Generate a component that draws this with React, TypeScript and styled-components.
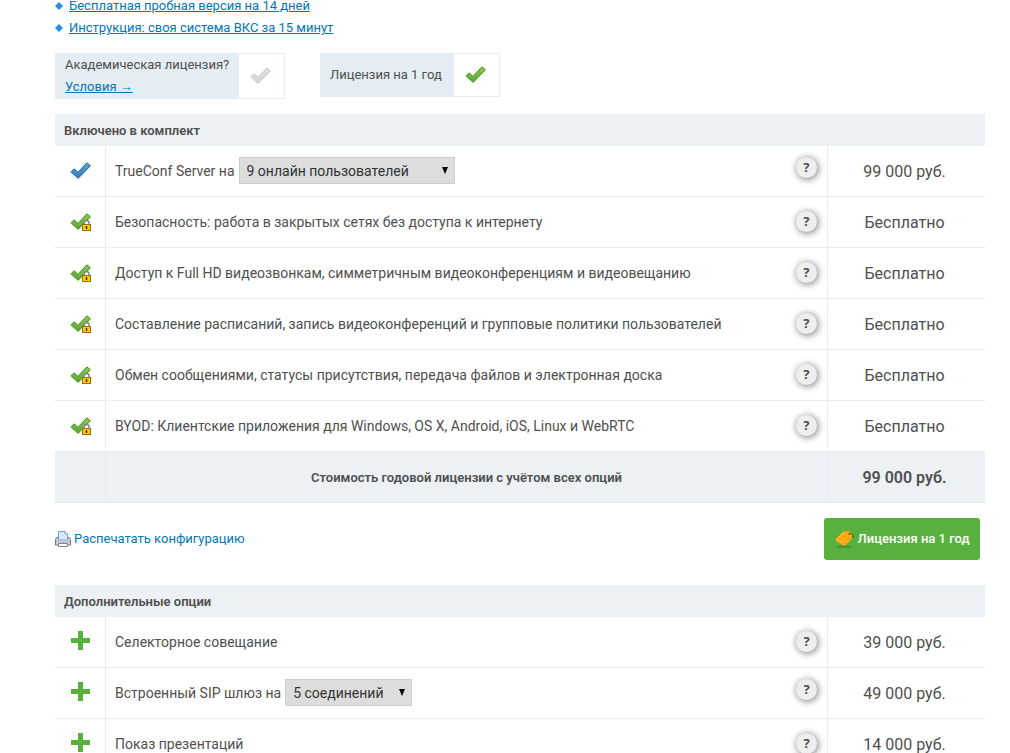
import React, { useState } from 'react';
import styled, { createGlobalStyle } from 'styled-components';

const line = '#e4edf2';
const band = '#ecf1f5';
const blue = '#0475b7';
const green = '#58b13f';

const GlobalStyle = createGlobalStyle`
  *, *::before, *::after { box-sizing: border-box; }
  body {
    margin: 0;
    background: #fff;
    color: #4f4f4f;
    font-family: Roboto, "Liberation Sans", sans-serif;
    font-size: 14px;
    line-height: 22px;
  }
  svg { display: block; flex: none; }
`;

const Page = styled.main`
  margin-top: -5px;
  padding: 0 25px 0 55px;
`;

const LinkList = styled.ul`
  list-style: none;
  margin: 0 0 14px;
  padding: 0;
  font-size: 13px;
`;

const LinkItem = styled.li`
  display: flex;
  align-items: center;
  gap: 6px;
`;

const Link = styled.a`
  color: ${blue};
  text-decoration: underline;
`;

const Toggles = styled.div`
  display: flex;
  align-items: flex-start;
  gap: 35px;
  margin-bottom: 15px;
  font-size: 13px;
`;

const Toggle = styled.div<{ $width: number }>`
  display: flex;
  width: ${(p) => p.$width}px;
  border: 1px solid ${line};
`;

const ToggleText = styled.div`
  flex: 1;
  display: flex;
  flex-direction: column;
  align-items: flex-start;
  justify-content: center;
  min-height: 42px;
  padding-left: 9px;
  background: #e4edf2;
`;

const ToggleBox = styled.label`
  position: relative;
  display: flex;
  align-items: center;
  justify-content: center;
  width: 45px;
  padding-right: 3px;
  cursor: pointer;
`;

const HiddenCheck = styled.input`
  position: absolute;
  inset: 0;
  width: 100%;
  height: 100%;
  margin: 0;
  opacity: 0;
  cursor: pointer;
`;

const Table = styled.table`
  width: 100%;
  table-layout: fixed;
  border-collapse: separate;
  border-spacing: 0;
`;

const IconCol = styled.col`
  width: 51px;
`;

const PriceCol = styled.col`
  width: 158px;
`;

const Heading = styled.th`
  height: 32px;
  padding: 2px 9px 0;
  background: ${band};
  font-size: 13px;
  font-weight: 600;
  text-align: left;
`;

const Cell = styled.td`
  height: 51px;
  padding: 0;
  border-bottom: 1px solid ${line};
`;

const IconCell = styled(Cell)`
  border-right: 1px solid ${line};
`;

const IconBox = styled.div`
  display: flex;
  justify-content: center;
`;

const AddButton = styled.button`
  display: block;
  margin: 0 auto;
  padding: 0 0 4px;
  border: 0;
  background: none;
  cursor: pointer;
`;

const Option = styled.div<{ $tall: boolean }>`
  display: flex;
  align-items: center;
  gap: 4px;
  padding: 0 10px 0 9px;
  padding-bottom: ${(p) => (p.$tall ? 1 : 0)}px;
`;

const Help = styled.button<{ $raised: boolean }>`
  width: 21px;
  height: 21px;
  margin: 0 0 ${(p) => (p.$raised ? 6 : 2)}px auto;
  padding: 0;
  border: 0;
  border-radius: 50%;
  background: #eee;
  box-shadow: 1px 1px 6px 1px #999;
  color: #4c4c4c;
  font: 700 13px/21px "Noto Sans", sans-serif;
  cursor: pointer;
`;

const SelectWrap = styled.span<{ $width: number }>`
  position: relative;
  width: ${(p) => p.$width}px;
`;

const Select = styled.select`
  display: block;
  appearance: none;
  width: 100%;
  height: 27px;
  padding: 0 7px;
  border: 1px solid #ccc;
  border-radius: 0;
  background: #ddd;
  color: #333;
  font: inherit;
`;

const Arrow = styled.svg`
  position: absolute;
  top: 10px;
  right: 7px;
  pointer-events: none;
`;

const PriceCell = styled(Cell)`
  padding: 2px 4px 0 0;
  border-left: 1px solid ${line};
  font-size: 16px;
  text-align: center;
`;

const TotalRow = styled.tr`
  background: ${band};
  font-weight: 600;
`;

const TotalLabel = styled(Cell)`
  padding-top: 2px;
  font-size: 13px;
  text-align: center;
`;

const Actions = styled.div`
  display: flex;
  align-items: center;
  justify-content: space-between;
  padding: 15px 5px 25px 0;
  font-size: 13px;
`;

const PrintLink = styled.a`
  display: flex;
  align-items: center;
  gap: 3px;
  color: ${blue};
  text-decoration: none;
`;

const BuyButton = styled.button`
  display: flex;
  align-items: center;
  justify-content: center;
  gap: 4px;
  width: 156px;
  height: 42px;
  padding: 0;
  border: 0;
  border-radius: 3px;
  background: ${green};
  color: #fff;
  font: inherit;
  font-weight: 500;
  cursor: pointer;
`;

const tones = {
  green: ['#8fce52', '#5aa336', '#458a26', '#e2f5d2'],
  blue: ['#64abda', '#2f79b0', '#1f6497', '#d6ebf8'],
  grey: ['#e0e0e0', '#d6d6d6', '#c6c6c6', '#f9f9f9'],
};

function Check({ tone, locked }: { tone: keyof typeof tones; locked?: boolean }) {
  const [top, bottom, edge, glow] = tones[tone];
  const id = `check-${tone}`;
  const shape = 'M2.2 11 5.2 8 9 11.5 18 2 21.200 4.8 9.2 17.2Z';
  return (
    <svg width="22" height="20" viewBox="0 0 22 20" aria-hidden="true" overflow="visible">
      <defs>
        <linearGradient id={id} x1="0" y1="0" x2="0" y2="1">
          <stop offset="0" stopColor={top} />
          <stop offset="1" stopColor={bottom} />
        </linearGradient>
      </defs>
      <path d={shape} fill="none" stroke={glow} strokeWidth="3" strokeLinejoin="round" />
      <path d={shape} fill={`url(#${id})`} stroke={edge} strokeWidth="1" />
      {locked && (
        <g>
          <path d="M15 13v-2a2.500 2.500 0 0 1 5 0v2" fill="#fff" fillOpacity=".5" stroke="#858585" strokeWidth="1.500" />
          <rect x="13.500" y="12.500" width="8" height="6" fill="#ffc814" stroke="#9a6f00" />
          <path d="M17.500 14v3" stroke="#3c2a00" strokeWidth="1.500" />
        </g>
      )}
    </svg>
  );
}

function Plus() {
  return (
    <svg width="19" height="19" viewBox="0 0 19 19" aria-hidden="true">
      <path d="M7 0h5v7h7v5h-7v7H7v-7H0V7h7z" fill={green} />
    </svg>
  );
}

function Diamond() {
  return (
    <svg width="8" height="8" viewBox="0 0 8 8" aria-hidden="true">
      <path d="M4 0 8 4 4 8 0 4z" fill="#2490e6" />
    </svg>
  );
}

function Printer() {
  return (
    <svg width="16" height="16" viewBox="0 0 16 16" aria-hidden="true">
      <path d="M1.500 6.500h13l1 2V14H.5V8.500z" fill="#d3d5dc" stroke="#70747f" />
      <path d="M3.500 9V.5H10L12.500 3v6z" fill="#d9eaff" stroke="#6ea3dc" />
      <path d="M10 .5V3h2.500" fill="#fff" stroke="#6ea3dc" />
      <path d="M1 9h14v3H1z" fill="#c1c4cc" />
      <path d="M3.500 12.500h9v3h-9z" fill="#fff" stroke="#80848e" />
    </svg>
  );
}

function Tag() {
  return (
    <svg width="19" height="17" viewBox="0 0 19 17" aria-hidden="true">
      <defs>
        <linearGradient id="tag" x1="0" y1="0" x2="1" y2="1">
          <stop offset="0" stopColor="#ffd040" />
          <stop offset="1" stopColor="#ff9d0a" />
        </linearGradient>
      </defs>
      <ellipse cx="9" cy="15.600" rx="8" ry="1.200" fill="#3b8030" opacity=".7" />
      <path
        d="M1 8 7.500 1.500Q8 1 9 1h6q1.500 0 1.500 1.500V7q0 1-.7 1.700L10 14q-1 1-2.200 0L1.200 9.700Q.3 9 1 8z"
        fill="url(#tag)"
        stroke="#f0a010"
      />
      <path d="M2.500 8.500 8.500 2.500h4L15 7l-6 5.500z" fill="#ffa814" />
      <circle cx="14.500" cy="3" r="1" fill="#59420a" />
      <path d="M14.500 3c1.500-1.500 3.500-.5 3.500 1.500V7" fill="none" stroke="#3f5d18" />
    </svg>
  );
}

type Item = { text: string; price: string; choices?: string[]; width?: number };

const included: Item[] = [
  { text: 'TrueConf Server на', price: '99 000 руб.', choices: ['9 онлайн пользователей'], width: 216 },
  { text: 'Безопасность: работа в закрытых сетях без доступа к интернету', price: 'Бесплатно' },
  { text: 'Доступ к Full HD видеозвонкам, симметричным видеоконференциям и видеовещанию', price: 'Бесплатно' },
  { text: 'Составление расписаний, запись видеоконференций и групповые политики пользователей', price: 'Бесплатно' },
  { text: 'Обмен сообщениями, статусы присутствия, передача файлов и электронная доска', price: 'Бесплатно' },
  { text: 'BYOD: Клиентские приложения для Windows, OS X, Android, iOS, Linux и WebRTC', price: 'Бесплатно' },
];

const extras: Item[] = [
  { text: 'Селекторное совещание', price: '39 000 руб.' },
  { text: 'Встроенный SIP шлюз на', price: '49 000 руб.', choices: ['5 соединений'], width: 127 },
  { text: 'Показ презентаций', price: '14 000 руб.' },
];

function Row({ item, icon }: { item: Item; icon: React.ReactNode }) {
  return (
    <tr>
      <IconCell>{icon}</IconCell>
      <Cell>
        <Option $tall={!!item.choices}>
          <span>{item.text}</span>
          {item.choices && (
            <SelectWrap $width={item.width ?? 120}>
              <Select aria-label={item.text}>
                {item.choices.map((c) => (
                  <option key={c}>{c}</option>
                ))}
              </Select>
              <Arrow width="6" height="7" viewBox="0 0 6 7" aria-hidden="true">
                <path d="M0 0h6L3 7z" fill="#000" />
              </Arrow>
            </SelectWrap>
          )}
          <Help type="button" $raised={!!item.choices}>?</Help>
        </Option>
      </Cell>
      <PriceCell>{item.price}</PriceCell>
    </tr>
  );
}

function Columns() {
  return (
    <colgroup>
      <IconCol />
      <col />
      <PriceCol />
    </colgroup>
  );
}

export default function App() {
  const [academic, setAcademic] = useState(false);
  const [yearly, setYearly] = useState(true);
  return (
    <>
      <GlobalStyle />
      <Page>
        <LinkList>
          <LinkItem><Diamond /><Link href="#trial">Бесплатная пробная версия на 14 дней</Link></LinkItem>
          <LinkItem><Diamond /><Link href="#guide">Инструкция: своя система ВКС за 15 минут</Link></LinkItem>
        </LinkList>

        <Toggles>
          <Toggle $width={230}>
            <ToggleText>
              <span>Академическая лицензия?</span>
              <Link href="#terms">Условия →</Link>
            </ToggleText>
            <ToggleBox>
              <HiddenCheck type="checkbox" aria-label="Академическая лицензия" checked={academic} onChange={(e) => setAcademic(e.target.checked)} />
              <Check tone={academic ? 'green' : 'grey'} />
            </ToggleBox>
          </Toggle>
          <Toggle $width={180}>
            <ToggleText>Лицензия на 1 год</ToggleText>
            <ToggleBox>
              <HiddenCheck type="checkbox" aria-label="Лицензия на 1 год" checked={yearly} onChange={(e) => setYearly(e.target.checked)} />
              <Check tone={yearly ? 'green' : 'grey'} />
            </ToggleBox>
          </Toggle>
        </Toggles>

        <Table>
          <Columns />
          <thead>
            <tr><Heading colSpan={3}>Включено в комплект</Heading></tr>
          </thead>
          <tbody>
            {included.map((item) => (
              <Row
                key={item.text}
                item={item}
                icon={<IconBox><Check tone={item.choices ? 'blue' : 'green'} locked={!item.choices} /></IconBox>}
              />
            ))}
            <TotalRow>
              <IconCell />
              <TotalLabel>Стоимость годовой лицензии с учётом всех опций</TotalLabel>
              <PriceCell>99 000 руб.</PriceCell>
            </TotalRow>
          </tbody>
        </Table>

        <Actions>
          <PrintLink href="#print"><Printer />Распечатать конфигурацию</PrintLink>
          <BuyButton type="button"><Tag />Лицензия на 1 год</BuyButton>
        </Actions>

        <Table>
          <Columns />
          <thead>
            <tr><Heading colSpan={3}>Дополнительные опции</Heading></tr>
          </thead>
          <tbody>
            {extras.map((item) => (
              <Row
                key={item.text}
                item={item}
                icon={<AddButton type="button" aria-label={`Добавить: ${item.text}`}><Plus /></AddButton>}
              />
            ))}
          </tbody>
        </Table>
      </Page>
    </>
  );
}
